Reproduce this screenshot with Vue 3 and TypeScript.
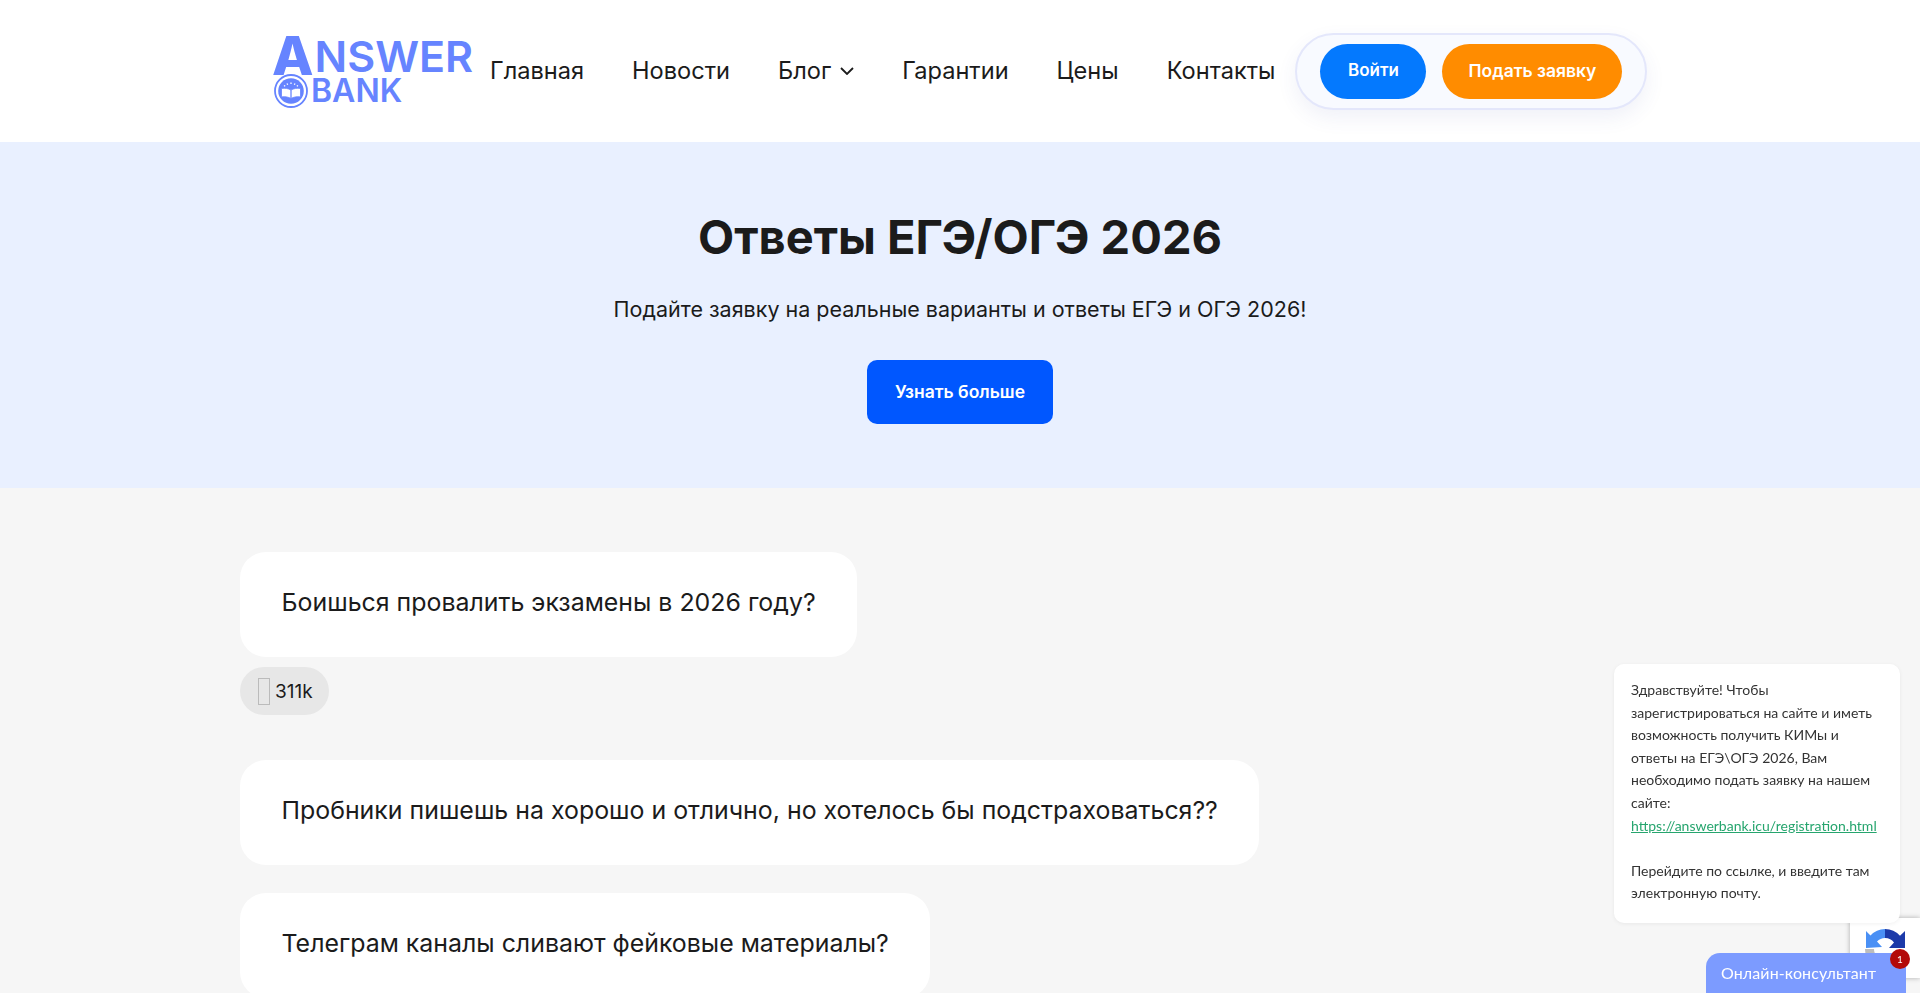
<script setup lang="ts">
const navItems = [
  { label: 'Главная' },
  { label: 'Новости' },
  { label: 'Блог', caret: true },
  { label: 'Гарантии' },
  { label: 'Цены' },
  { label: 'Контакты' },
]

const questions = [
  { text: 'Боишься провалить экзамены в 2026 году?', views: '311k' },
  { text: 'Пробники пишешь на хорошо и отлично, но хотелось бы подстраховаться??' },
  { text: 'Телеграм каналы сливают фейковые материалы?' },
]
</script>

<template>
  <div class="page">
    <header class="header">
      <a class="logo" href="#">
        <span class="logo-top"><span class="logo-a">A</span><span class="logo-rest">NSWER</span></span>
        <span class="logo-bottom">
          <svg class="logo-icon" viewBox="0 0 34 34" width="34" height="34" fill="none">
            <circle cx="17" cy="17" r="16" stroke="#6684ff" stroke-width="1.8" />
            <circle cx="17" cy="17" r="12.8" fill="#6684ff" />
            <path d="M7.500 14.500c3.500-.6 7 0 9.500 1.600v8.400c-2.500-1.500-6-2.100-9.500-1.600zM26.500 14.500c-3.500-.6-7 0-9.500 1.600v8.400c2.500-1.500 6-2.100 9.500-1.600z" fill="#fff" stroke="#6684ff" stroke-width=".8" />
            <path d="M10 11.500l1.200.8M13 9.500l.7 1.300M17 8.500v1.600M21 9.500l-.7 1.300M24 11.500l-1.200.8" stroke="#fff" stroke-width="1.300" />
          </svg>
          <span class="logo-bank">BANK</span>
        </span>
      </a>
      <nav class="nav">
        <a v-for="item in navItems" :key="item.label" class="nav-link" href="#">
          {{ item.label }}
          <svg v-if="item.caret" class="caret" viewBox="0 0 14 8" width="14" height="8" fill="none">
            <path d="M1 1l6 6 6-6" stroke="#1b1b1b" stroke-width="1.800" />
          </svg>
        </a>
      </nav>
      <div class="auth">
        <button class="auth-btn login">Войти</button>
        <button class="auth-btn apply">Подать заявку</button>
      </div>
    </header>

    <section class="hero">
      <h1>Ответы ЕГЭ/ОГЭ 2026</h1>
      <p>Подайте заявку на реальные варианты и ответы ЕГЭ и ОГЭ 2026!</p>
      <button class="more">Узнать больше</button>
    </section>

    <main class="questions">
      <div v-for="q in questions" :key="q.text" class="question">
        <div class="bubble">{{ q.text }}</div>
        <div v-if="q.views" class="views"><span class="tofu"></span>{{ q.views }}</div>
      </div>
    </main>

    <div class="recaptcha">
      <svg viewBox="0 0 40 40" width="40" height="40" fill="none">
        <path d="M20 0a20 20 0 0 1 15 6.800L40 2v17H24l5-5.500A11 11 0 0 0 20 9z" fill="#1c3aa9" />
        <path d="M20 0A20 20 0 0 0 5.500 6.500L1 2v17l16-1-5-5.500A11 11 0 0 1 20 9z" fill="#4a90f5" />
        <path d="M0 20a20 20 0 0 0 20 20V31A11 11 0 0 1 9 20z" fill="#bdbdbd" />
      </svg>
    </div>

    <div class="chat-msg">
      <p>Здравствуйте! Чтобы зарегистрироваться на сайте и иметь возможность получить КИМы и ответы на ЕГЭ\ОГЭ 2026, Вам необходимо подать заявку на нашем сайте:<br><a href="#">https://answerbank.icu/registration.html</a></p>
      <p class="chat-gap">Перейдите по ссылке, и введите там электронную почту.</p>
    </div>

    <div class="chat-btn">
      Онлайн-консультант
      <span class="badge">1</span>
    </div>
  </div>
</template>

<style>
html, body {
  margin: 0;
  height: 100%;
  overflow: hidden;
}
</style>

<style scoped>
.page {
  height: 993px;
  overflow: hidden;
  background: #f6f6f6;
  font-family: 'Inter', 'Noto Sans', sans-serif;
  color: #1b1b1b;
}

.header {
  height: 142px;
  box-sizing: border-box;
  background: #fff;
  display: flex;
  align-items: center;
  padding-left: 272px;
}

.logo {
  width: 218px;
  height: 72px;
  margin-top: -3px;
  display: flex;
  flex-direction: column;
  text-decoration: none;
  color: #6684ff;
  font-weight: 600;
}

.logo-top {
  display: flex;
  align-items: flex-end;
  height: 36px;
  margin-top: 4px;
}

.logo-a {
  display: inline-block;
  height: 36px;
  font-size: 54px;
  line-height: 36px;
  font-weight: 800;
  letter-spacing: 1px;
}

.logo-rest {
  display: inline-block;
  height: 36px;
  font-size: 43px;
  line-height: 36px;
  letter-spacing: 0;
}

.logo-bottom {
  display: flex;
  align-items: center;
  gap: 3px;
  height: 30px;
  margin-top: 2px;
  padding-left: 2px;
}

.logo-bank {
  display: inline-block;
  height: 30px;
  font-size: 32px;
  line-height: 30px;
}

.nav {
  display: flex;
  align-items: center;
  gap: 48px;
  margin-top: -2px;
}

.nav-link {
  display: flex;
  align-items: center;
  gap: 9px;
  font-size: 23.6px;
  color: #1b1b1b;
  text-decoration: none;
}

.caret {
  margin-top: 2px;
}

.auth {
  margin-left: 20px;
  width: 352px;
  height: 77px;
  flex: none;
  box-sizing: border-box;
  display: flex;
  align-items: center;
  gap: 16px;
  padding: 0 23px;
  background: #f8faff;
  border: 2px solid #e4e7fb;
  border-radius: 40px;
  box-shadow: 0 8px 20px rgba(60, 80, 160, 0.08);
}

.auth-btn {
  height: 55px;
  border: none;
  border-radius: 28px;
  padding: 0 0 2px;
  color: #fff;
  font-family: inherit;
  font-size: 17.500px;
  font-weight: 600;
}

.login {
  width: 106px;
  background: #0479fe;
  font-size: 17px;
}

.apply {
  width: 180px;
  background: #ff8c00;
}

.hero {
  height: 346px;
  box-sizing: border-box;
  background: #e9f0ff;
  padding-top: 63px;
  display: flex;
  flex-direction: column;
  align-items: center;
}

.hero h1 {
  margin: 0;
  font-size: 47px;
  line-height: 64px;
  font-weight: 700;
}

.hero p {
  margin: 24px 0 0;
  font-size: 21.500px;
  line-height: 32px;
}

.more {
  margin-top: 35px;
  width: 186px;
  height: 64px;
  border: none;
  border-radius: 10px;
  padding: 0 0 2px;
  background: #0057ff;
  color: #fff;
  font-family: inherit;
  font-size: 17.500px;
  font-weight: 600;
}

.questions {
  padding: 64px 0 0 240px;
  display: flex;
  flex-direction: column;
  gap: 28px;
  align-items: flex-start;
}

.question:first-child {
  margin-bottom: 17px;
}

.bubble {
  width: fit-content;
  padding: 32px 41.500px 36px;
  background: #fff;
  border-radius: 26px;
  font-size: 24.900px;
  line-height: 37px;
}

.views {
  margin-top: 10px;
  width: 89px;
  height: 48px;
  box-sizing: border-box;
  padding-left: 18px;
  display: flex;
  align-items: center;
  gap: 5px;
  background: #e7e7e7;
  border-radius: 24px;
  font-size: 19px;
}

.tofu {
  width: 10px;
  height: 25px;
  border: 1px solid #bbb;
}

.recaptcha {
  position: fixed;
  left: 1850px;
  top: 918px;
  width: 70px;
  height: 60px;
  padding: 11px 0 0 15px;
  box-sizing: border-box;
  background: #fff;
  box-shadow: 0 0 5px rgba(0, 0, 0, 0.3);
}

.chat-msg {
  position: fixed;
  left: 1614px;
  top: 664px;
  width: 286px;
  height: 259px;
  box-sizing: border-box;
  padding: 15px 17px;
  background: #fff;
  border-radius: 10px;
  box-shadow: 0 1px 4px rgba(0, 0, 0, 0.06);
  font-family: 'Lato', sans-serif;
  font-size: 14px;
  line-height: 22.6px;
  color: #333;
}

.chat-msg p {
  margin: 0;
}

.chat-gap {
  margin-top: 22.6px !important;
}

.chat-msg a {
  color: #26a56e;
}

.chat-btn {
  position: fixed;
  left: 1706px;
  top: 953px;
  width: 200px;
  height: 40px;
  box-sizing: border-box;
  padding: 10px 15px 0;
  background: #7c9bff;
  border-radius: 14px 14px 0 0;
  font-family: 'Lato', sans-serif;
  font-size: 16px;
  line-height: 20px;
  letter-spacing: 0.1px;
  color: #fff;
}

.badge {
  position: absolute;
  right: -4px;
  top: -4px;
  width: 20px;
  height: 20px;
  border-radius: 50%;
  background: #b30a0a;
  font-size: 10px;
  line-height: 20px;
  letter-spacing: 0;
  text-align: center;
}
</style>
